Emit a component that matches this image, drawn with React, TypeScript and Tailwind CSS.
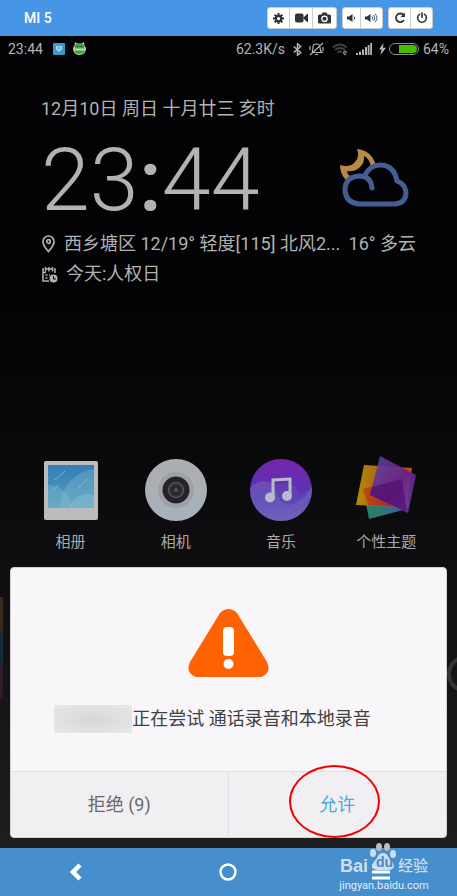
import type { ReactNode } from "react";

function ToolButton({ label, width, children }: { label: string; width: string; children: ReactNode }) {
  return (
    <button type="button" aria-label={label} className={`flex items-center justify-center text-[#333333] ${width}`}>
      {children}
    </button>
  );
}

const toolGroup = "flex h-[22px] divide-x divide-[#cccccc] rounded-[3px] border border-[#cccccc] bg-white";

function Toolbar() {
  return (
    <header className="flex h-9 items-center bg-[#4795e5] pl-6 pr-6">
      <h1 className="grow text-sm font-medium text-white">MI 5</h1>
      <div className="flex gap-[5px]">
        <div className={toolGroup}>
          <ToolButton label="Settings" width="w-[22px]">
            <svg width="11" height="11" viewBox="0 0 22 22" fill="none" stroke="currentColor">
              <circle cx="11" cy="11" r="5.5" strokeWidth="4.5" />
              <path d="M11 0v5M11 17v5M0 11h5M17 11h5M3.2 3.2l3.6 3.6M15.2 15.2l3.6 3.6M3.2 18.8l3.6-3.6M15.2 6.8l3.6-3.6" strokeWidth="4" />
            </svg>
          </ToolButton>
          <ToolButton label="Record" width="w-[23px]">
            <svg width="13" height="10" viewBox="0 0 13 10" fill="currentColor">
              <rect x="0" y="0.5" width="8.500" height="9" rx="2" />
              <path d="M8 5l4-4h1v8h-1z" />
            </svg>
          </ToolButton>
          <ToolButton label="Screenshot" width="w-[23px]">
            <svg width="13" height="12" viewBox="0 0 13 12">
              <path d="M1.500 2.500h2l1-2h4l1 2h2Q13 2.500 13 4v6Q13 11.500 11.500 11.500h-10Q0 11.500 0 10V4Q0 2.500 1.500 2.500z" fill="currentColor" />
              <circle cx="6.500" cy="6.800" r="2.700" fill="none" stroke="white" strokeWidth="1.300" />
            </svg>
          </ToolButton>
        </div>
        <div className={toolGroup}>
          <ToolButton label="Volume down" width="w-[18px]">
            <svg width="9" height="10" viewBox="0 0 9 10" fill="currentColor">
              <path d="M0 3.500h2L5.500 1v8L2 6.500H0z" />
              <path d="M7 3.500q1.500 1.500 0 3" fill="none" stroke="currentColor" />
            </svg>
          </ToolButton>
          <ToolButton label="Volume up" width="w-[21px]">
            <svg width="13" height="10" viewBox="0 0 13 10" fill="currentColor">
              <path d="M0 3.500h2L5.500 1v8L2 6.500H0z" />
              <path d="M7 3.300q1.700 1.700 0 3.400M8.500 2q2.800 3 0 6M10 .7q4 4.300 0 8.600" fill="none" stroke="#3b6287" />
            </svg>
          </ToolButton>
        </div>
        <div className={toolGroup}>
          <ToolButton label="Rotate" width="w-[22px]">
            <svg width="12" height="12" viewBox="0 0 12 12" fill="none" stroke="currentColor" strokeWidth="1.800">
              <path d="M9.300 2.700A4.300 4.300 0 1 0 10 8" />
              <path d="M11 .5v4.500H6.500z" fill="currentColor" stroke="none" />
            </svg>
          </ToolButton>
          <ToolButton label="Power" width="w-[21px]">
            <svg width="12" height="12" viewBox="0 0 12 12" fill="none" stroke="currentColor" strokeWidth="1.600" strokeLinecap="round">
              <path d="M3.500 2.300a4.400 4.400 0 1 0 5 0M6 1v4.500" />
            </svg>
          </ToolButton>
        </div>
      </div>
    </header>
  );
}

function StatusBar() {
  return (
    <div className="flex h-[26px] items-center px-2 text-sm text-[#b4b4b4]">
      <span>23:44</span>
      <svg className="ml-[10px]" width="12" height="12" viewBox="0 0 12 12">
        <rect width="12" height="12" rx="1" fill="#3b9acb" />
        <path d="M3 3h6v3.500L6 9 3 6.500z" fill="#a7d0e4" />
        <circle cx="6" cy="5" r="1" fill="#3b9acb" />
      </svg>
      <svg className="ml-2" width="13" height="14" viewBox="0 0 13 14">
        <path d="M2 0l2 1.500h5L11 0l.5 4L13 6q0 7-6.500 7T0 6l1.500-2z" fill="#c3d8be" />
        <path d="M2.500 2h8l1 4.500H1.500zM1 8.500h11q-1 3.500-5.500 3.500T1 8.500z" fill="#3ba63e" />
        <path d="M3.500 4.500h2M7.500 4.500h2" stroke="#26542b" />
      </svg>
      <span className="ml-auto">62.3K/s</span>
      <svg className="ml-2" width="9" height="13" viewBox="0 0 9 13" fill="none" stroke="currentColor" strokeWidth="1.500">
        <path d="M.7 3.500l7 6-3.200 2.700V.8l3.200 2.700-7 6" />
      </svg>
      <svg className="ml-[7px]" width="15" height="14" viewBox="0 0 15 14" fill="none" stroke="currentColor" strokeWidth="1.200">
        <path d="M3 10q1-1 1-5 0-3 3.500-3T11 5q0 4 2 5.500H3M6 12.500h3M1 13L14 1M1 4v4M14 5v4" />
      </svg>
      <svg className="ml-2" width="16" height="13" viewBox="0 0 16 13" fill="none" stroke="#414141" strokeWidth="1.800">
        <path d="M.8 4.500q7-6 14 0M3 7q5-4 10 0M5.500 9.500q2.500-2 4.500 0" />
        <path d="M11.500 10h3q0-2-1.500-2t-1.500 2 2.500 2" stroke="#999999" strokeWidth="1" />
      </svg>
      <svg className="ml-2" width="16" height="12" viewBox="0 0 16 12" fill="currentColor">
        <path d="M0 10h2v2H0zM3 8.500h2V12H3zM6 6.500h2V12H6zM9 4h2v8H9zM11.700 2h1.800v10h-1.800zM14.200 0H16v12h-1.800z" />
      </svg>
      <svg className="ml-[7px]" width="7" height="12" viewBox="0 0 7 12" fill="currentColor">
        <path d="M4.500 0L0 6.500h2.500L1.500 12 7 4.800H4z" />
      </svg>
      <span className="ml-[3px] flex h-3 w-[30px] justify-end rounded-full border border-[#8b8b8b] p-px">
        <span className="w-[18px] rounded-r-full bg-[#48bd05]" />
      </span>
      <span className="ml-1">64%</span>
    </div>
  );
}

function WeatherIcon() {
  return (
    <svg width="70" height="60" viewBox="0 0 70 60">
      <path d="M17 1Q31 2 36 17L31 19Q30 11 24 8Q25 15 19 20Q14 24 7 23Q7 26 10 28L6 32Q0 26 0 17Q10 20 15 14Q20 9 17 1z" fill="#b98a45" />
      <path d="M32 40Q31 28 19 28Q5 29 5 42Q6 55 19 56H55Q66 55 66 44Q65 36 57 33Q54 17 40 17Q30 17 25 27" fill="none" stroke="#425e93" strokeWidth="5" strokeLinecap="round" strokeLinejoin="round" />
    </svg>
  );
}

function Weather() {
  return (
    <section className="mt-[35px] px-[41px] text-lg leading-6 text-[#b2b2b2]">
      <p>12月10日 周日 十月廿三 亥时</p>
      <div className="mt-[9px] flex h-[100px] items-center justify-between">
        <time className="text-[88px] font-light leading-[100px]">
          23<span className="font-medium">:</span>44
        </time>
        <div className="mr-[6px] pb-1">
          <WeatherIcon />
        </div>
      </div>
      <div className="mt-[2px] flex items-center whitespace-nowrap">
        <svg width="15" height="18" viewBox="0 0 15 18" fill="none" stroke="currentColor" strokeWidth="1.700">
          <path d="M7.500 16.500Q2 10.500 2 6.500A5.500 5.500 0 0 1 13 6.500Q13 10.500 7.500 16.500z" />
          <circle cx="7.500" cy="6.500" r="1.800" />
        </svg>
        <span className="ml-2">西乡塘区 12/19° 轻度[115] 北风2...</span>
        <span className="ml-auto">16° 多云</span>
      </div>
      <div className="mt-[6px] flex items-center">
        <svg width="17" height="17" viewBox="0 0 17 17" fill="none" stroke="currentColor" strokeWidth="1.500">
          <path d="M8 15H2V3h1M13 3h1v4M2 6.500h3M4.500 1v4.500M8 1v4.500M11.500 1v4.500M4 3h8" />
          <path d="M4.500 9h2M8 9h1M4.500 12h2" />
          <circle cx="12.500" cy="12.500" r="4" fill="currentColor" stroke="none" />
          <path d="M12.500 10v3H15" stroke="#050507" strokeWidth="1" />
        </svg>
        <span className="ml-2">今天:人权日</span>
      </div>
    </section>
  );
}

function GalleryIcon() {
  return (
    <svg width="62" height="62" viewBox="0 0 62 62">
      <defs>
        <linearGradient id="sky" x1="0" y1="0" x2="0" y2="1"><stop stopColor="#367db8" /><stop offset="1" stopColor="#539fbb" /></linearGradient>
        <clipPath id="photo"><rect x="8" y="6" width="46" height="43" /></clipPath>
      </defs>
      <rect x="4" y="2" width="54" height="59" rx="2" fill="#bbbcbd" />
      <rect x="8" y="6" width="46" height="43" fill="url(#sky)" />
      <g clipPath="url(#photo)" fill="#91c4d5" fillOpacity=".3">
        <circle cx="58" cy="48" r="38" />
        <circle cx="8" cy="50" r="24" />
        <circle cx="48" cy="55" r="20" fillOpacity=".4" />
      </g>
      <path d="M15 21l10-9M12 32l7-6M36 31l12-11" stroke="#82b6d2" strokeWidth="1" />
    </svg>
  );
}

function CameraIcon() {
  return (
    <svg width="62" height="62" viewBox="0 0 62 62">
      <defs><linearGradient id="shell" x1="0" y1="0" x2="0" y2="1"><stop stopColor="#adadaf" /><stop offset="1" stopColor="#a6b2bb" /></linearGradient></defs>
      <circle cx="31" cy="31" r="31" fill="url(#shell)" />
      <circle cx="31" cy="31" r="18" fill="#9fa1a5" />
      <circle cx="31" cy="31" r="13.500" fill="#242329" />
      <circle cx="31" cy="31" r="7.500" fill="#313035" stroke="#55535a" strokeWidth="1.500" />
      <circle cx="31" cy="31" r="4.500" fill="#29282e" />
      <circle cx="31" cy="31" r="2" fill="#55535a" />
    </svg>
  );
}

function MusicIcon() {
  return (
    <svg width="62" height="62" viewBox="0 0 62 62">
      <defs>
        <linearGradient id="disc" x1="0" y1="0" x2="0" y2="1"><stop stopColor="#7625ad" /><stop offset=".6" stopColor="#5634b3" /><stop offset="1" stopColor="#6458b4" /></linearGradient>
        <clipPath id="round"><circle cx="31" cy="31" r="31" /></clipPath>
      </defs>
      <circle cx="31" cy="31" r="31" fill="url(#disc)" />
      <g clipPath="url(#round)" fill="#7469bb">
        <path d="M0 29Q12 17 24 26Q29 45 39 46Q50 46 62 28V62H0z" fillOpacity=".55" />
        <path d="M24 26Q42 20 49 33Q56 36 62 26V38Q47 48 39 46Q29 45 24 26z" fillOpacity=".25" />
      </g>
      <path d="M23 38V21l17-1v17" fill="none" stroke="#b9bbc9" strokeWidth="3" />
      <circle cx="20" cy="38.500" r="5" fill="#b9bbc9" />
      <circle cx="37" cy="37" r="5" fill="#b9bbc9" />
    </svg>
  );
}

function ThemeIcon() {
  return (
    <svg width="62" height="70" viewBox="0 0 62 70">
      <defs>
        <linearGradient id="amber"><stop stopColor="#b08b06" /><stop offset=".4" stopColor="#b06812" /><stop offset="1" stopColor="#bd4a16" /></linearGradient>
        <linearGradient id="leaf"><stop stopColor="#27865a" /><stop offset="1" stopColor="#405c9d" /></linearGradient>
        <linearGradient id="ember"><stop stopColor="#be4a0c" /><stop offset="1" stopColor="#a21043" /></linearGradient>
        <linearGradient id="violet" x1="0" y1="0" x2="1" y2="1"><stop stopColor="#5a46a2" /><stop offset=".55" stopColor="#64208a" /><stop offset="1" stopColor="#7546a2" /></linearGradient>
      </defs>
      <path d="M8 34l39-10 5 30-38 10z" fill="url(#leaf)" />
      <path d="M9 10l48 3-5 39-51-2z" fill="url(#amber)" />
      <path d="M8 34l39-10 5 28-39-2z" fill="url(#ember)" />
      <path d="M25 1l36 19-8 38-38-18z" fill="url(#violet)" fillOpacity=".9" />
      <path d="M17 32l30-8 5 33-37-17z" fill="#4e0e70" fillOpacity=".65" />
    </svg>
  );
}

const apps = [
  { name: "相册", icon: <GalleryIcon /> },
  { name: "相机", icon: <CameraIcon /> },
  { name: "音乐", icon: <MusicIcon /> },
  { name: "个性主题", icon: <ThemeIcon /> },
];

function AppRow() {
  return (
    <nav className="mt-[168px] grid grid-cols-4 px-[18px]">
      {apps.map((app) => (
        <button key={app.name} type="button" className="flex flex-col items-center text-[15px] leading-5 text-[#a9a9a9]">
          <span className="flex h-[72px] items-center justify-center">{app.icon}</span>
          <span className="mt-[6px]">{app.name}</span>
        </button>
      ))}
    </nav>
  );
}

function PermissionDialog() {
  return (
    <div role="dialog" aria-label="录音" className="mx-[10px] mt-[15px] mb-[10px] rounded-[4px] border border-[#d2d1d3] bg-[#f8f6f9]">
      <div className="flex h-[203px] flex-col items-center pt-10">
        <svg width="81" height="70" viewBox="0 0 81 70">
          <path d="M32 5Q36 1 40.500 1Q45 1 49 5L79 54Q84 65 73 69H8Q-3 65 2 54z" fill="#ff6200" />
          <rect x="35" y="19" width="11" height="29" rx="4" fill="white" />
          <circle cx="40.500" cy="56" r="5" fill="white" />
        </svg>
        <p className="mr-8 mt-[27px] flex items-center whitespace-nowrap text-lg leading-7 text-[#414043]">
          <span className="h-7 w-[78px] bg-radial from-[#d7d6d9] to-[#e8e7ea]" />
          <span>正在尝试 通话录音和本地录音</span>
        </p>
      </div>
      <div className="grid h-[66px] grid-cols-2 divide-x divide-[#e1dfe3] rounded-b-[4px] border-t border-[#e1dfe3] bg-[#f1eff2] text-lg">
        <button type="button" className="text-[#6b696c]">拒绝 (9)</button>
        <button type="button" className="relative text-[#49a8dc]">
          允许
          <span className="absolute left-[60px] -top-[7px] h-[73px] w-[91px] rounded-[50%] border-2 border-[#f50000]" />
        </button>
      </div>
    </div>
  );
}

function Watermark() {
  return (
    <div className="pointer-events-none absolute -top-[6px] right-[28px] w-[90px] text-[#ccdff0]">
      <svg className="absolute left-[30px] top-0" width="28" height="30" viewBox="0 0 28 30" fill="currentColor">
        <ellipse cx="4" cy="11" rx="3" ry="4" />
        <ellipse cx="10" cy="5" rx="3" ry="4" fill="#babdc0" />
        <ellipse cx="18" cy="5" rx="3" ry="4" fill="#babdc0" />
        <ellipse cx="24" cy="12" rx="3" ry="4" />
        <path d="M14 11q4 0 6 5l4 5q3 6-4 7H8q-7-1-4-7l4-5q2-5 6-5z" />
      </svg>
      <div className="flex items-center justify-between pt-[10px] pl-px leading-5">
        <span className="font-['Liberation_Sans',sans-serif] text-lg font-bold">Bai</span>
        <span className="absolute left-[37px] top-[10px] font-['Liberation_Sans',sans-serif] text-sm font-bold text-[#4c88bd]">du</span>
        <span className="pr-px text-[15px] font-medium">经验</span>
      </div>
      <p className="text-center text-[11px] leading-3 text-[#e3edf6]">jingyan.baidu.com</p>
    </div>
  );
}

function BottomNav() {
  return (
    <footer className="relative grid h-12 grid-cols-3 bg-[#468ecc] pb-px text-white">
      <button type="button" aria-label="Back" className="flex items-center justify-center">
        <svg width="14" height="18" viewBox="0 0 14 18" fill="none" stroke="currentColor" strokeWidth="4.500"><path d="M11 2L4 9l7 7" /></svg>
      </button>
      <button type="button" aria-label="Home" className="flex items-center justify-center">
        <svg width="18" height="18" viewBox="0 0 18 18" fill="none" stroke="currentColor" strokeWidth="2.500"><circle cx="9" cy="9" r="7.500" /></svg>
      </button>
      <button type="button" aria-label="Menu" className="flex items-center justify-center">
        <svg width="18" height="16" viewBox="0 0 18 16" fill="none" stroke="currentColor" strokeWidth="3"><path d="M0 2h18M0 8h18M0 14h18" /></svg>
      </button>
      <Watermark />
    </footer>
  );
}

export default function App() {
  return (
    <div className="flex min-h-screen flex-col font-['Roboto','Noto_Sans_CJK_SC',sans-serif]">
      <Toolbar />
      <main className="relative grow overflow-hidden bg-linear-to-b from-[#030305] from-30% to-[#1e1e1f]">
        <div className="absolute bottom-[149px] left-0 w-[3px]">
          <div className="h-[34px] bg-[#382b1b]" />
          <div className="h-[34px] bg-[#142c3c]" />
          <div className="h-[34px] bg-[#321828]" />
        </div>
        <div className="absolute -right-[28px] bottom-[155px] size-[38px] rounded-full border-4 border-[#343437]" />
        <div className="relative">
          <StatusBar />
          <Weather />
          <AppRow />
          <PermissionDialog />
        </div>
      </main>
      <BottomNav />
    </div>
  );
}
